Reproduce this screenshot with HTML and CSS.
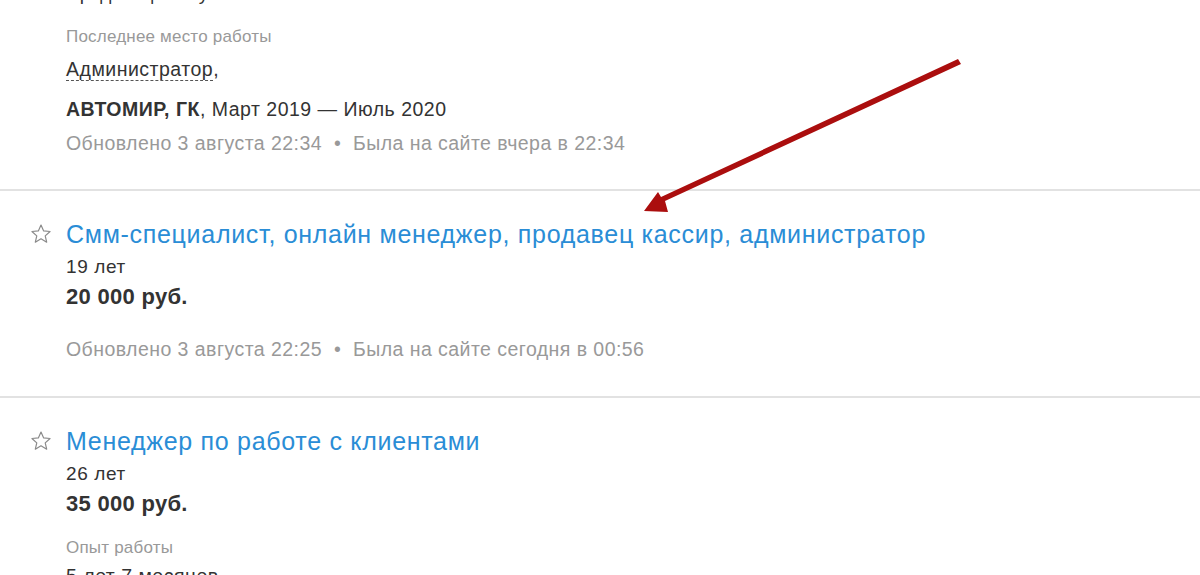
FILE: index.html
```html
<!DOCTYPE html>
<html lang="ru">

<head>
    <meta charset="UTF-8">
    <meta name="viewport" content="width=device-width, initial-scale=1.0">
    <title>Резюме</title>
    <link rel="stylesheet" href="styles.css">
</head>

<body>
    <div class="resume-list">
        <div class="resume resume-first">
            <div class="resume-body">
                <div class="cut-line">Продавец-консультант</div>
                <div class="label">Последнее место работы</div>
                <div class="position"><span class="dashed">Администратор</span>,</div>
                <div class="company"><b>АВТОМИР, ГК</b>, Март 2019 — Июль 2020</div>
                <div class="meta">Обновлено 3 августа 22:34 <span class="dot">•</span> Была на сайте вчера в 22:34</div>
            </div>
        </div>

        <div class="resume">
            <div class="star">
                <svg width="22" height="22" viewBox="0 0 24 24">
                    <path d="M12 2.2l2.9 6.4 7 .7-5.3 4.7 1.6 6.9L12 17.3l-6.2 3.6 1.6-6.9-5.3-4.7 7-.7z" fill="none" stroke="#8a8a8a" stroke-width="1.3" stroke-linejoin="round"/>
                </svg>
            </div>
            <div class="resume-body">
                <a class="title" href="#">Смм-специалист, онлайн менеджер, продавец кассир, администратор</a>
                <div class="age">19 лет</div>
                <div class="salary">20 000 руб.</div>
                <div class="meta meta-gap">Обновлено 3 августа 22:25 <span class="dot">•</span> Была на сайте сегодня в 00:56</div>
            </div>
        </div>

        <div class="resume">
            <div class="star">
                <svg width="22" height="22" viewBox="0 0 24 24">
                    <path d="M12 2.2l2.9 6.4 7 .7-5.3 4.7 1.6 6.9L12 17.3l-6.2 3.6 1.6-6.9-5.3-4.7 7-.7z" fill="none" stroke="#8a8a8a" stroke-width="1.3" stroke-linejoin="round"/>
                </svg>
            </div>
            <div class="resume-body">
                <a class="title" href="#">Менеджер по работе с клиентами</a>
                <div class="age">26 лет</div>
                <div class="salary">35 000 руб.</div>
                <div class="label label-gap">Опыт работы</div>
                <div class="position position-last">5 лет 7 месяцев</div>
            </div>
        </div>
    </div>

    <svg class="arrow" width="1200" height="575" viewBox="0 0 1200 575">
        <polygon points="958,59 961,64 665,201 668,212 644,211 658,192 661,197" fill="#ab0e0e"/>
    </svg>
</body>

</html>
```

FILE: styles.css
```css
body {
    margin: 0;
    font-family: "Liberation Sans", Arial, sans-serif;
    background-color: #fff;
    color: #333;
    height: 575px;
    overflow: hidden;
}

.resume-list {
    width: 1200px;
}

.resume {
    display: flex;
    border-top: 2px solid #e2e2e2;
    padding: 27px 0 35px;
}

.resume-first {
    border-top: none;
    padding-top: 0;
    margin-top: -18px;
    padding-bottom: 34px;
}

.resume-first .resume-body {
    margin-left: 66px;
}

.star {
    width: 36px;
    margin-left: 30px;
    padding-top: 5px;
}

.resume-body {
    display: flex;
    flex-direction: column;
}

.cut-line {
    font-size: 19px;
    line-height: 24px;
    margin-bottom: 19px;
}

.label {
    font-size: 17px;
    letter-spacing: 0.2px;
    line-height: 24px;
    color: #999;
}

.label-gap {
    margin-top: 18px;
}

.position {
    font-size: 19.5px;
    letter-spacing: 0.5px;
    line-height: 24px;
    margin-top: 8px;
}

.position-last {
    margin-top: 4px;
}

.dashed {
    border-bottom: 1px dashed #555;
}

.company {
    font-size: 19.5px;
    letter-spacing: 0.5px;
    line-height: 24px;
    margin-top: 16px;
}

.meta {
    font-size: 19.5px;
    letter-spacing: 0.45px;
    line-height: 24px;
    color: #999;
    margin-top: 10px;
}

.meta-gap {
    margin-top: 26px;
}

.dot {
    margin: 0 6px;
}

.title {
    font-size: 25px;
    letter-spacing: 0.7px;
    line-height: 32px;
    color: #2a8dd6;
    text-decoration: none;
}

.age {
    font-size: 19px;
    letter-spacing: 0.6px;
    line-height: 24px;
    margin-top: 5px;
}

.salary {
    font-size: 22px;
    font-weight: bold;
    letter-spacing: 0.3px;
    line-height: 28px;
    margin-top: 4px;
}

.arrow {
    position: absolute;
    left: 0;
    top: 0;
    pointer-events: none;
}
```
